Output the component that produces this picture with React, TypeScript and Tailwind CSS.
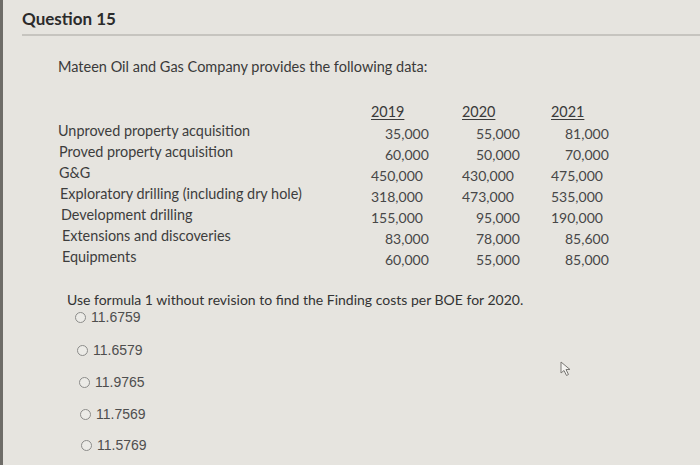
import React from 'react';

type Row = { label: string; values: string[] };

const ROWS: Row[] = [
  { label: 'Unproved property acquisition', values: ['35,000', '55,000', '81,000'] },
  { label: 'Proved property acquisition', values: ['60,000', '50,000', '70,000'] },
  { label: 'G&G', values: ['450,000', '430,000', '475,000'] },
  { label: 'Exploratory drilling (including dry hole)', values: ['318,000', '473,000', '535,000'] },
  { label: 'Development drilling', values: ['155,000', '95,000', '190,000'] },
  { label: 'Extensions and discoveries', values: ['83,000', '78,000', '85,600'] },
  { label: 'Equipments', values: ['60,000', '55,000', '85,000'] },
];

const YEARS = ['2019', '2020', '2021'];

// slight left drift of the photographed options
const OPTIONS = [
  { v: '11.6759', cls: 'pl-0' },
  { v: '11.6579', cls: 'pl-[2px] mt-[17px]' },
  { v: '11.9765', cls: 'pl-[4px] mt-[16px]' },
  { v: '11.7569', cls: 'pl-[5px] mt-[16px]' },
  { v: '11.5769', cls: 'pl-[6px] mt-[15px]' },
];

const Cursor = () => (
  <svg className="absolute left-[557px] top-[361px]" width="12" height="16" viewBox="0 0 12 16">
    <path d="M1 1 L1 12 L4 9.5 L6.5 14.5 L8.5 13.5 L6 8.5 L10 8.5 Z" fill="#f4f3f0" stroke="#7a7874" strokeWidth="1" />
  </svg>
);

const App: React.FC = () => {
  return (
    <div className="relative w-[700px] h-[465px] overflow-hidden bg-[#e6e4df] border-l-[3px] border-[#6e6c68] font-['Lato','Open_Sans',sans-serif]">
      {/* Header */}
      <div className="pl-[19px] pt-[8px]">
        <h1 className="text-[17px] font-bold text-[#2b2b2b] leading-[22px]">Question 15</h1>
        <div className="mt-[4px] h-[2px] bg-[#c6c4bf]" />
      </div>

      {/* Body */}
      <div className="pl-[55px] pt-[21px] text-[14.5px] text-[#3a3a3a]">
        <p className="leading-[20px]">Mateen Oil and Gas Company provides the following data:</p>

        {/* Data table */}
        <div className="mt-[26px] flex text-[14.4px] leading-[21px]">
          <div className="w-[313px] pt-[17px] text-[#3d3d3d]">
            {ROWS.map((r, i) => (
              <div key={r.label} style={{ paddingLeft: Math.round(i * 0.7) }}>{r.label}</div>
            ))}
          </div>
          {YEARS.map((y, ci) => (
            <div key={y} className={ci === 0 ? 'w-[91px]' : ci === 1 ? 'w-[89px]' : 'w-[60px]'}>
              <div className="underline underline-offset-[2px] text-[#3a3a3a] leading-[18px]">{y}</div>
              <div className="pt-[2px] text-[14px] text-[#474747]">
                {ROWS.map((r) => {
                  const v = r.values[ci];
                  return (
                    <div key={r.label} className={v.length === 6 ? 'pl-[14px]' : ''}>{v}</div>
                  );
                })}
              </div>
            </div>
          ))}
        </div>

        {/* Question */}
        <p className="mt-[21px] pl-[9px] text-[14px] leading-[18px] text-[#333333]">
          Use formula 1 without revision to find the Finding costs per BOE for 2020.
        </p>

        <div className="pl-[17px] font-['Liberation_Sans',Arial,sans-serif] text-[14px] leading-[16px] text-[#4e4e4e]">
          {OPTIONS.map((o) => (
            <div key={o.v} className={`flex items-center gap-[5px] h-[16px] ${o.cls}`}>
              <span className="w-[11px] h-[11px] rounded-full border-[1.5px] border-[#8c8c8a] bg-[#ecebe7]" />
              <span>{o.v}</span>
            </div>
          ))}
        </div>
      </div>

      <Cursor />
    </div>
  );
};

export default App;
